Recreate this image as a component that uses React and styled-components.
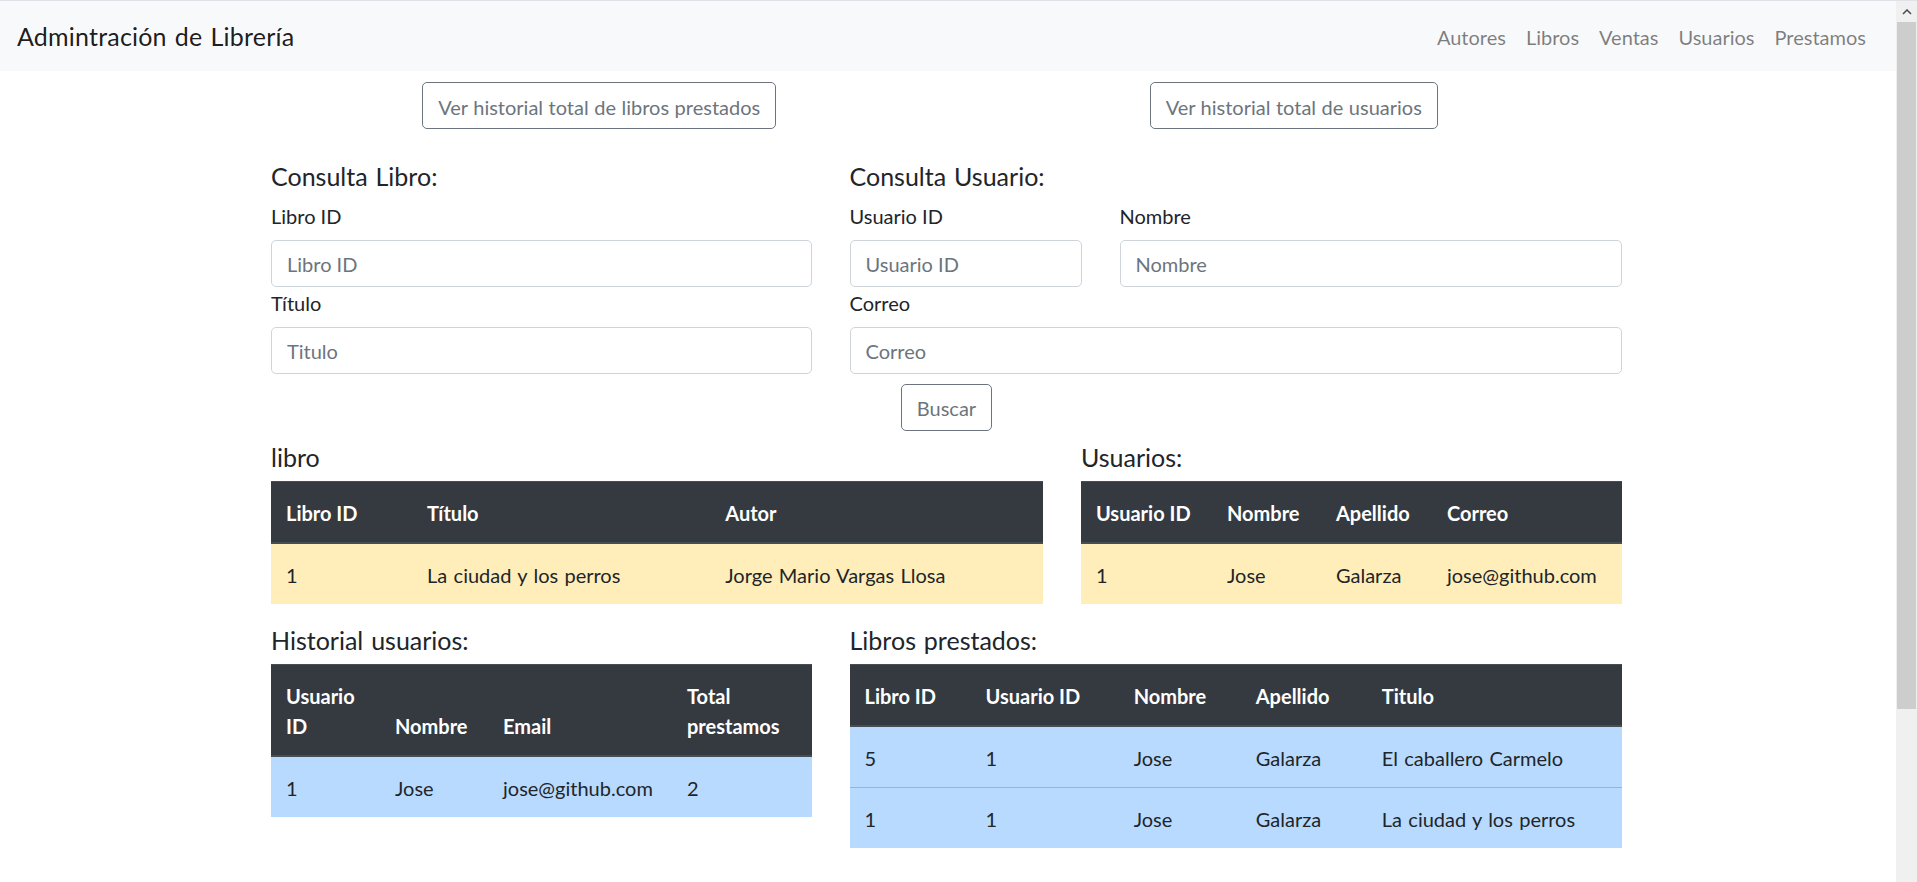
import React from 'react';
import styled, { createGlobalStyle } from 'styled-components';

const GlobalStyle = createGlobalStyle`
  html, body { margin: 0; padding: 0; height: 100%; overflow: hidden; }
  body {
    font-family: Lato, "Noto Sans", "Liberation Sans", sans-serif;
    font-size: 20px;
    line-height: 30px;
    color: #212529;
    background: #fff;
  }
  *, *::before, *::after { box-sizing: border-box; }
`;

const Window = styled.div`
  display: flex;
  height: 100vh;
  border-top: 1px solid #dee2e6;
  overflow: hidden;
`;

const Page = styled.div`
  flex: 1;
  min-width: 0;
  overflow: hidden;
`;

const Rail = styled.div`
  width: 21px;
  flex: none;
  background: #f0f0f0;
  display: flex;
  flex-direction: column;
`;

const RailArrow = styled.div`
  height: 21px;
  display: flex;
  align-items: center;
  justify-content: center;
`;

const RailThumb = styled.div`
  height: 687px;
  margin: 0 1px;
  background: #cdcdcd;
`;

const Navbar = styled.nav`
  height: 70px;
  background: #f8f9fa;
  display: flex;
  align-items: center;
  justify-content: space-between;
  padding: 0 20px 0 17px;
`;

const Brand = styled.a`
  padding-top: 2px;
  font-size: 25px;
  line-height: 37.5px;
  color: rgba(0, 0, 0, 0.9);
  text-decoration: none;
  letter-spacing: 0.2px;
  word-spacing: 0.06em;
`;

const NavList = styled.div`
  display: flex;
  align-items: center;
`;

const NavLink = styled.a`
  padding: 11px 10px 9px;
  font-size: 20px;
  line-height: 30px;
  color: rgba(0, 0, 0, 0.5);
  text-decoration: none;
`;

const Content = styled.main`
  width: 1351px;
  margin-left: calc(50% - 677px);
`;

const TopActions = styled.div`
  display: grid;
  grid-template-columns: 1fr 1fr;
  margin: 0 -19px;
  padding-top: 11px;
`;

const CenterCell = styled.div`
  display: flex;
  justify-content: center;
`;

const OutlineButton = styled.button`
  height: 47px;
  padding: 8.5px 15px 6.5px;
  border: 1px solid #6c757d;
  border-radius: 5px;
  background: transparent;
  color: #6c757d;
  font-family: inherit;
  font-size: 20px;
  line-height: 30px;
  word-spacing: 0.02em;
  cursor: pointer;
`;

const Grid12 = styled.div`
  display: grid;
  grid-template-columns: repeat(12, minmax(0, 1fr));
  column-gap: 37.5px;
  margin-top: ${(p) => p.$mt || 0}px;
  align-items: start;
`;

const Col = styled.div`
  grid-column: span ${(p) => p.$span};
  min-width: 0;
`;

const Heading = styled.h5`
  margin: 0 0 9px;
  padding-top: 1px;
  font-size: 25px;
  line-height: 30px;
  font-weight: 400;
  word-spacing: 0.06em;
`;

const Label = styled.label`
  display: block;
  margin-bottom: 9px;
  padding-top: 1px;
  font-size: 20px;
  line-height: 30px;
`;

const Input = styled.input`
  display: block;
  width: 100%;
  height: 47px;
  padding: 8.5px 15px 6.5px;
  border: 1px solid #ced4da;
  border-radius: 5px;
  font-family: inherit;
  font-size: 20px;
  line-height: 30px;
  color: #495057;
  background: #fff;
  &::placeholder { color: #6c757d; opacity: 1; }
`;

const ButtonRow = styled.div`
  display: flex;
  justify-content: center;
  margin-top: 10px;
`;

const Table = styled.table`
  width: 100%;
  table-layout: fixed;
  border-collapse: collapse;
  margin-bottom: 20px;
`;

const Th = styled.th`
  padding: 16px 15px 14px;
  text-align: left;
  vertical-align: bottom;
  font-weight: 700;
  line-height: 30px;
  color: #fff;
  background: #343a40;
  border-top: 1px solid #454d55;
  border-bottom: 2px solid #454d55;
`;

const tones = {
  warning: { bg: '#ffeeba', border: '#ffdf7e' },
  primary: { bg: '#b8daff', border: '#7abaff' },
};

const Td = styled.td`
  padding: 16px 15px 14px;
  vertical-align: top;
  line-height: 30px;
  background: ${(p) => tones[p.$tone].bg};
  border-top: 1px solid ${(p) => tones[p.$tone].border};
  word-spacing: 0.06em;
`;

function DataTable({ title, cols, widths, rows, tone }) {
  return (
    <>
      <Heading>{title}</Heading>
      <Table>
        <colgroup>
          {widths.map((w, i) => (
            <col key={i} style={{ width: w }} />
          ))}
        </colgroup>
        <thead>
          <tr>
            {cols.map((c) => (
              <Th key={c}>{c}</Th>
            ))}
          </tr>
        </thead>
        <tbody>
          {rows.map((r, i) => (
            <tr key={i}>
              {r.map((v, j) => (
                <Td key={j} $tone={tone}>
                  {v}
                </Td>
              ))}
            </tr>
          ))}
        </tbody>
      </Table>
    </>
  );
}

export default function App() {
  return (
    <>
      <GlobalStyle />
      <Window>
        <Page>
          <Navbar>
            <Brand href="#">Admintración de Librería</Brand>
            <NavList>
              {['Autores', 'Libros', 'Ventas', 'Usuarios', 'Prestamos'].map((l) => (
                <NavLink key={l} href="#">
                  {l}
                </NavLink>
              ))}
            </NavList>
          </Navbar>

          <Content>
            <TopActions>
              <CenterCell>
                <OutlineButton>Ver historial total de libros prestados</OutlineButton>
              </CenterCell>
              <CenterCell>
                <OutlineButton>Ver historial total de usuarios</OutlineButton>
              </CenterCell>
            </TopActions>

            <Grid12 $mt={30.5}>
              <Col $span={5}>
                <Heading>Consulta Libro:</Heading>
                <Label>Libro ID</Label>
                <Input placeholder="Libro ID" />
                <Label>Título</Label>
                <Input placeholder="Titulo" />
              </Col>
              <Col $span={7}>
                <Heading>Consulta Usuario:</Heading>
                <Grid12>
                  <Col $span={4}>
                    <Label>Usuario ID</Label>
                    <Input placeholder="Usuario ID" />
                  </Col>
                  <Col $span={8}>
                    <Label>Nombre</Label>
                    <Input placeholder="Nombre" />
                  </Col>
                  <Col $span={12}>
                    <Label>Correo</Label>
                    <Input placeholder="Correo" />
                  </Col>
                </Grid12>
              </Col>
            </Grid12>

            <ButtonRow>
              <OutlineButton>Buscar</OutlineButton>
            </ButtonRow>

            <Grid12 $mt={10}>
              <Col $span={7}>
                <DataTable
                  title="libro"
                  tone="warning"
                  cols={['Libro ID', 'Título', 'Autor']}
                  widths={[141, 298, 333]}
                  rows={[['1', 'La ciudad y los perros', 'Jorge Mario Vargas Llosa']]}
                />
              </Col>
              <Col $span={5}>
                <DataTable
                  title="Usuarios:"
                  tone="warning"
                  cols={['Usuario ID', 'Nombre', 'Apellido', 'Correo']}
                  widths={[131, 109, 111, 190]}
                  rows={[['1', 'Jose', 'Galarza', 'jose@github.com']]}
                />
              </Col>
            </Grid12>

            <Grid12>
              <Col $span={5}>
                <DataTable
                  title="Historial usuarios:"
                  tone="primary"
                  cols={['Usuario ID', 'Nombre', 'Email', 'Total prestamos']}
                  widths={[109, 108, 184, 140]}
                  rows={[['1', 'Jose', 'jose@github.com', '2']]}
                />
              </Col>
              <Col $span={7}>
                <DataTable
                  title="Libros prestados:"
                  tone="primary"
                  cols={['Libro ID', 'Usuario ID', 'Nombre', 'Apellido', 'Titulo']}
                  widths={[121, 148, 122, 126, 255]}
                  rows={[
                    ['5', '1', 'Jose', 'Galarza', 'El caballero Carmelo'],
                    ['1', '1', 'Jose', 'Galarza', 'La ciudad y los perros'],
                  ]}
                />
              </Col>
            </Grid12>
          </Content>
        </Page>

        <Rail>
          <RailArrow>
            <svg width="10" height="6" viewBox="0 0 10 6">
              <polyline points="1,5 5,1 9,5" fill="none" stroke="#505050" strokeWidth="1.6" />
            </svg>
          </RailArrow>
          <RailThumb />
        </Rail>
      </Window>
    </>
  );
}
